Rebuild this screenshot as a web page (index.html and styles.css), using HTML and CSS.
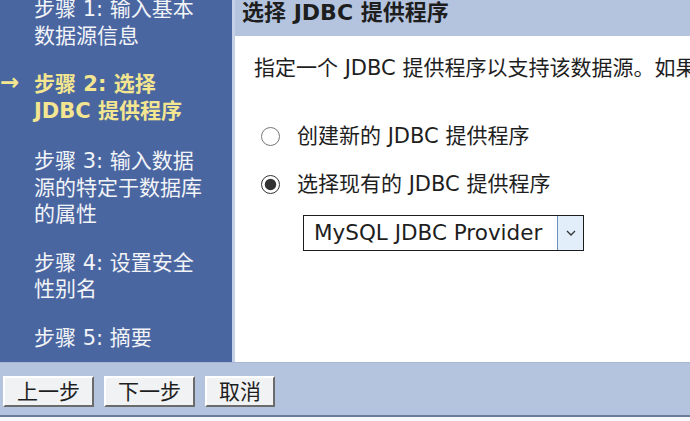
FILE: index.html
```html
<!DOCTYPE html>
<html lang="zh-CN">
<head>
    <meta charset="UTF-8">
    <title>新建数据源</title>
    <link rel="stylesheet" href="styles.css">
</head>
<body>
    <div class="wizard">
        <ul class="steps">
            <li>步骤 1: 输入基本数据源信息</li>
            <li class="current">步骤 2: 选择 JDBC 提供程序</li>
            <li>步骤 3: 输入数据源的特定于数据库的属性</li>
            <li>步骤 4: 设置安全性别名</li>
            <li>步骤 5: 摘要</li>
        </ul>

        <div class="panel">
            <h2 class="panel-title">选择 JDBC 提供程序</h2>
            <div class="panel-body">
                <p class="intro">指定一个 JDBC 提供程序以支持该数据源。如果选择现有的提供程序，则不会创建新的提供程序。</p>

                <label class="option">
                    <input type="radio" name="provider" value="new">
                    <span>创建新的 JDBC 提供程序</span>
                </label>
                <label class="option">
                    <input type="radio" name="provider" value="existing" checked>
                    <span>选择现有的 JDBC 提供程序</span>
                </label>

                <div class="select-box">
                    <span class="select-value">MySQL JDBC Provider</span>
                    <span class="select-arrow">
                        <svg width="12" height="8" viewBox="0 0 12 8">
                            <path d="M2 2 L6 6 L10 2" fill="none" stroke="#333" stroke-width="1.3"/>
                        </svg>
                    </span>
                </div>
            </div>
        </div>
    </div>

    <div class="button-bar">
        <button class="wizard-button">上一步</button>
        <button class="wizard-button">下一步</button>
        <button class="wizard-button">取消</button>
    </div>
</body>
</html>
```

FILE: styles.css
```css
:root {
    --sidebar-bg: #4a66a1;
    --sidebar-text: #f2f4f8;
    --current-step: #f4e690;
    --bar-bg: #b4c4de;
    --bar-line: #6d7c98;
    --text-color: #1e1e1e;
}

body {
    margin: 0;
    height: 100vh;
    overflow: hidden;
    background-color: #f6f8fb;
    color: var(--text-color);
    font-family: "DejaVu Sans", "Noto Sans CJK SC", sans-serif;
    font-size: 21px;
}

.wizard {
    display: grid;
    grid-template-columns: 232px 1fr;
    height: 362px;
    background-color: #ffffff;
}

/* left step list */
.steps {
    list-style: none;
    margin: 0;
    padding: 0 20px 0 34px;
    background-color: var(--sidebar-bg);
    color: var(--sidebar-text);
    overflow: hidden;
}

.steps li {
    line-height: 26.5px;
    margin-bottom: 22px;
}

.steps li:first-child {
    margin-top: -4px;
}

.steps li.current {
    position: relative;
    color: var(--current-step);
    font-weight: 700;
    margin-bottom: 24px;
}

.steps li.current::before {
    content: '→';
    position: absolute;
    left: -34px;
    top: -2px;
    font-size: 23px;
    font-weight: 700;
}

/* right panel */
.panel {
    border-left: 3px solid #c3d0e6;
    overflow: hidden;
    white-space: nowrap;
}

.panel-title {
    margin: 0;
    height: 36px;
    padding-left: 7px;
    background-color: var(--bar-bg);
    font-size: 22px;
    font-weight: 700;
    line-height: 26px;
}

.panel-body {
    padding: 19px 0 0 19px;
}

.intro {
    margin: 0 0 42px;
    line-height: 26px;
}

.option {
    display: flex;
    align-items: center;
    gap: 17px;
    margin: 0 0 22px 7px;
    line-height: 26px;
}

.option input {
    width: 19px;
    height: 19px;
    margin: 0;
    accent-color: #333333;
}

.select-box {
    display: flex;
    align-items: stretch;
    margin: -4px 0 0 49px;
    height: 36px;
    width: 281px;
    box-sizing: border-box;
    border: 1px solid #1c1c1c;
    background-color: #ffffff;
}

.select-value {
    flex: 1;
    padding-left: 10px;
    line-height: 34px;
    font-size: 21.5px;
}

.select-arrow {
    width: 25px;
    display: flex;
    align-items: center;
    justify-content: center;
    background-color: #e3eefb;
    border-left: 1px solid #6f8fb8;
}

/* bottom buttons */
.button-bar {
    display: flex;
    gap: 10px;
    height: 55px;
    padding: 13px 0 0 3px;
    box-sizing: border-box;
    background-color: var(--bar-bg);
    border-top: 1px solid #a8b8d3;
    border-bottom: 2px solid var(--bar-line);
}

.wizard-button {
    height: 31px;
    padding: 0 12px;
    font-family: inherit;
    font-size: 21px;
    line-height: 24px;
    color: var(--text-color);
    background-color: #f1f2f4;
    border: 2px solid;
    border-color: #ffffff #6b6b6b #6b6b6b #ffffff;
}
```
